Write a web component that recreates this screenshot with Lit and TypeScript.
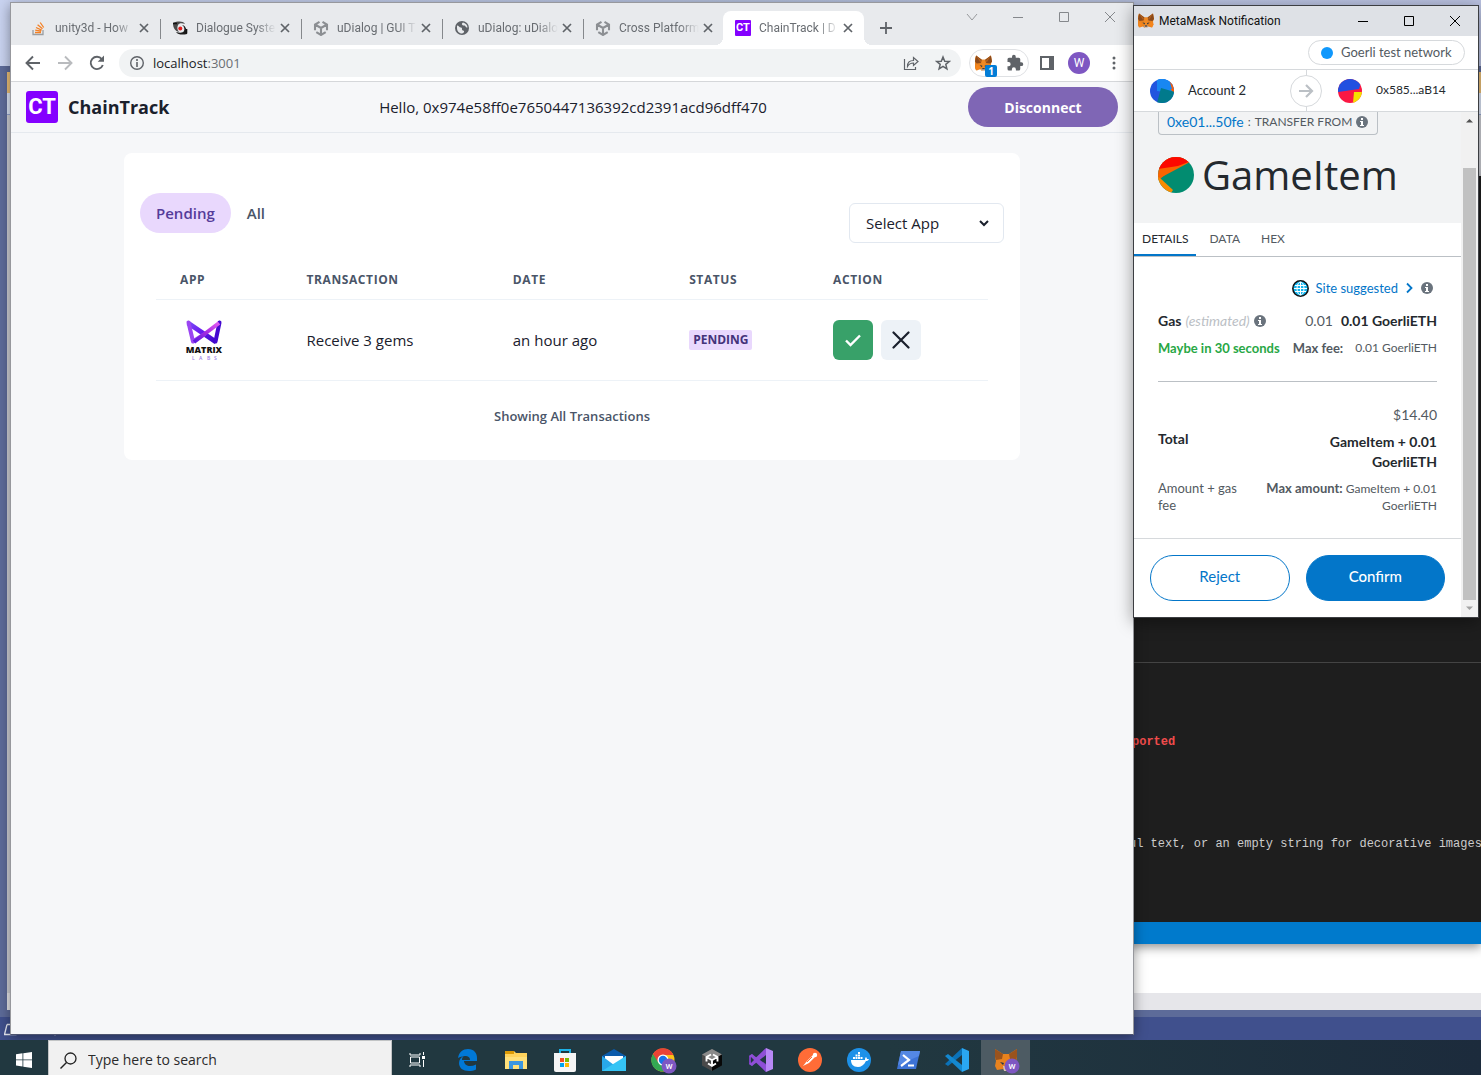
import { LitElement, html, css, svg } from "lit";
import { customElement, property, state } from "lit/decorators.js";
import { classMap } from "lit/directives/class-map.js";

/* ---------- shared icons ---------- */

const fox = (size: number) => html`<svg width=${size} height=${size} viewBox="0 0 32 32" aria-hidden="true">
  <path d="M2 1l11 8h6l11-8 2 11-2 5 1 6-3 6-8-2-3 3h-4l-3-3-8 2-3-6 1-6-2-5z" fill="#e8821e" />
  <path d="M2 1l11 8-2 6-8 1-3-4zM30 1L19 9l2 6 8 1 3-4z" fill="#8a4a1c" />
  <path d="M2 1l10 10-2 3zM30 1L20 11l2 3z" fill="#b5611d" />
  <path d="M4 17l6 6-6 6-3-6zM28 17l-6 6 6 6 3-6z" fill="#f6851b" />
  <path d="M13 9h6l1 14-4 3-4-3z" fill="#f08a24" />
  <path d="M9 19l5 1-1 3zM23 19l-5 1 1 3z" fill="#233447" />
  <path d="M13 25h6l1 3-2 2h-4l-2-2z" fill="#d7c1b3" />
  <path d="M14 25h4l1 2h-6z" fill="#161616" />
</svg>`;

const info = () => html`<svg width="12" height="12" viewBox="0 0 12 12" aria-hidden="true">
  <circle cx="6" cy="6" r="6" fill="#6a737d" />
  <path d="M5 2h2v2H5zM4 5h3v4h1v1H4V9h1V6H4z" fill="#fff" />
</svg>`;

const unity = html`<svg width="16" height="16" viewBox="0 0 16 16" aria-hidden="true">
  <path d="M6.500 1.800L2 4.500v5.700M9.500 1.800L14 4.500v5.700M3.300 12.200L8 15l4.700-2.800M2 4.500L8 8l6-3.500M8 8v7" fill="none" stroke="#8c8f93" stroke-width="2.100" />
</svg>`;

const closeGlyph = html`<svg width="10" height="10" viewBox="0 0 10 10" aria-hidden="true">
  <path d="M1 1l8 8M9 1L1 9" stroke="#5f6368" stroke-width="1.700" />
</svg>`;

const favicons: Record<string, unknown> = {
  stack: html`<svg width="16" height="16" viewBox="0 0 16 16" aria-hidden="true">
    <path d="M2 10v4.500h10V10" fill="none" stroke="#9a9ea2" stroke-width="1.300" />
    <path d="M4 12.500h6M4.200 10.200l6 1M5 7.500l5.700 2.600M6.600 4.800l4.900 4M9.200 2.500l3.500 5" stroke="#f48024" stroke-width="1.300" />
  </svg>`,
  eye: html`<svg width="16" height="16" viewBox="0 0 16 16" aria-hidden="true">
    <path d="M1 3c5-2 10-2 12 1-3-1-6-1-7 1s-1 5 1 7C3 11 1 8 1 3z" fill="#4a4a4a" />
    <path d="M15 14c-4 1-9 1-11-2 4 1 7 1 8-1s0-5-2-6c3 0 5 4 5 9z" fill="#1c1c1c" />
    <path d="M1 3.500h4M14.500 9v4.500" stroke="#111" stroke-width="1.600" />
    <circle cx="8.300" cy="8.500" r="2" fill="#e01f1f" />
  </svg>`,
  unity,
  globe: html`<svg width="16" height="16" viewBox="0 0 16 16" aria-hidden="true">
    <circle cx="8" cy="8" r="7" fill="#5f6368" />
    <path d="M3 5.500c2 0 2 2 4 2s0 3 2 3 1 3-1 3C5 13.500 3 11 3 8zM9 2.500c-2 1-1 3 1 3s1 2 3.500 2c0-2.500-2-4.500-4.500-5z" fill="#e8eaed" />
  </svg>`,
  ct: html`<span class="ct ct-small">CT</span>`,
};

/* ---------- browser window ---------- */

@customElement("browser-window")
class BrowserWindow extends LitElement {
  @state() private filter = "Pending";

  private tabs = [
    { icon: "stack", title: "unity3d - How" },
    { icon: "eye", title: "Dialogue Syste" },
    { icon: "unity", title: "uDialog | GUI T" },
    { icon: "globe", title: "uDialog: uDialo" },
    { icon: "unity", title: "Cross Platform" },
    { icon: "ct", title: "ChainTrack | D" },
  ];

  static styles = css`
    :host {
      display: flex;
      flex-direction: column;
      box-sizing: border-box;
      border: 1px solid #97989d;
      border-bottom-color: #4d5470;
      background: #f6f7f9;
      box-shadow: 0 3px 12px rgba(0, 0, 0, 0.4);
      font-family: "Open Sans", "Noto Sans", sans-serif;
      color: #1a202c;
    }
    * { box-sizing: border-box; }
    svg { display: block; flex: none; }
    button { font: inherit; color: inherit; border: 0; background: none; padding: 0; margin: 0; cursor: pointer; }
    .strip { display: flex; align-items: flex-end; height: 42px; padding-left: 8px; background: #e8eaed; }
    .tab {
      display: flex; align-items: center; width: 141px; height: 34px; padding: 0 11px 0 12px;
      position: relative; font-family: Roboto, "Open Sans", sans-serif; font-size: 12px; color: #696d72;
    }
    .tab .name {
      flex: 1; margin: 0 4px 0 8px; overflow: hidden; white-space: nowrap; line-height: 18px;
      mask-image: linear-gradient(to right, #000 75%, transparent);
    }
    .tab:not(.active):not(.last)::after { content: ""; position: absolute; right: -1px; top: 8px; height: 20px; width: 1px; background: #85888c; }
    .tab.active { margin-left: -1px; background: #fff; border-radius: 8px 8px 0 0; }
    .tab.active::before, .tab.active::after { content: ""; position: absolute; bottom: 0; width: 8px; height: 8px; }
    .tab.active::before { left: -8px; background: radial-gradient(circle at 0 0, transparent 8px, #fff 8px); }
    .tab.active::after { right: -8px; background: radial-gradient(circle at 100% 0, transparent 8px, #fff 8px); }
    .new { display: flex; align-items: center; height: 34px; margin-left: 15px; }
    .controls { display: flex; margin-left: auto; align-self: flex-start; }
    .controls button { display: grid; place-items: center; width: 46px; height: 28px; }
    .ct {
      display: grid; place-items: center; flex: none; background: #8400ff; color: #fff; white-space: nowrap;
      font-family: Roboto, "Open Sans", sans-serif; font-weight: 700;
    }
    .ct-small { width: 16px; height: 16px; font-size: 11px; line-height: 16px; border-radius: 1px; }
    .ct-big { width: 32px; height: 32px; font-size: 22px; line-height: 32px; border-radius: 3px; }

    .toolbar { display: flex; align-items: center; height: 37px; padding: 0 14px 0 12px; background: #fff; border-bottom: 1px solid #d5d7da; }
    .nav { display: flex; gap: 12px; margin-right: 12px; }
    .omnibox { display: flex; align-items: center; flex: 1; height: 28px; padding: 0 10px; border-radius: 14px; background: #f1f3f4; }
    .address { flex: 1; margin-left: 8px; font-size: 13px; line-height: 20px; }
    .address a { color: #202124; text-decoration: none; }
    .address .port { color: #6b6f73; }
    .omnibox .acts { display: flex; gap: 16px; }
    .ext { display: flex; align-items: center; gap: 14px; height: 28px; width: 60px; margin-left: 8px; padding: 0 5px; border: 1px solid #dfe1e4; border-radius: 14px; position: relative; }
    .count { position: absolute; left: 15px; top: 15px; width: 12px; height: 12px; border-radius: 2px; background: #037dd6; color: #fff; font-size: 10px; font-weight: 700; line-height: 12px; text-align: center; }
    .panel { margin-left: 10px; }
    .avatar { display: grid; place-items: center; width: 22px; height: 22px; margin: 0 13px; border-radius: 50%; background: #7e57c2; color: #fff; font-family: Roboto, sans-serif; font-size: 12px; }
    .menu { margin-right: 0; margin-left: 0; }

    .site-head { display: flex; align-items: center; justify-content: space-between; padding: 5px 15px; border-bottom: 1px solid #e5e9ee; }
    .brand { display: flex; align-items: center; gap: 10px; width: 152px; font-size: 18px; line-height: 28px; font-weight: 700; }
    .hello { font-size: 15px; line-height: 24px; margin: 0; }
    .disconnect { width: 150px; height: 40px; border-radius: 20px; background: #7f66b5; color: #fff; font-weight: 700; font-size: 14px; }

    .card { width: 80%; max-width: 896px; margin: 20px auto; padding: 40px 16px 33px; background: #fff; border-radius: 8px; }
    .filters { display: flex; align-items: flex-start; }
    .pill { height: 40px; padding: 0 16px; border-radius: 20px; font-size: 15px; font-weight: 600; color: #4a5568; }
    .pill.on { background: #e9d8fd; color: #553c9a; }
    .picker { position: relative; margin: 10px 0 0 auto; }
    .picker select { appearance: none; width: 155px; height: 40px; padding: 0 32px 0 16px; border: 1px solid #e2e8f0; border-radius: 6px; background: #fff; font: inherit; font-size: 15px; color: inherit; }
    .picker svg { position: absolute; right: 14px; top: 15px; pointer-events: none; }

    .table-box { padding: 16px 16px 0; }
    table { width: 100%; border-collapse: collapse; table-layout: fixed; }
    th, td { text-align: left; padding: 0 24px; border-bottom: 1px solid #edf2f7; white-space: nowrap; }
    th { height: 40px; padding-top: 2px; font-size: 12px; line-height: 16px; font-weight: 700; color: #4a5568; letter-spacing: 0.6px; }
    td { height: 81px; font-size: 15px; line-height: 24px; }
    .c1 { width: 15.200%; } .c2 { width: 24.800%; } .c3 { width: 21.200%; } .c4 { width: 17.300%; }
    .badge { display: block; width: fit-content; padding: 0 4px; border-radius: 2px; background: #e9d8fd; color: #44337a; font-size: 12px; line-height: 20px; font-weight: 700; }
    .pair { display: flex; gap: 8px; }
    .act { display: grid; place-items: center; width: 40px; height: 40px; border-radius: 6px; background: #edf2f7; }
    .act.ok { background: #38a169; }
    .foot { margin: 24px 0 0; text-align: center; font-size: 13px; line-height: 22px; font-weight: 600; color: #4a5568; }
    .app-logo { display: block; }
  `;

  render() {
    return html`
      <div class="strip">
        ${this.tabs.map((t, i) => html`
          <div class=${classMap({ tab: true, active: i === 5, last: i === 4 })}>
            ${favicons[t.icon]}
            <span class="name">${t.title}</span>
            <button aria-label="Close tab">${closeGlyph}</button>
          </div>`)}
        <button class="new" aria-label="New tab">
          <svg width="14" height="14" viewBox="0 0 14 14"><path d="M7 1v12M1 7h12" stroke="#5f6368" stroke-width="1.800" /></svg>
        </button>
        <div class="controls">
          <button aria-label="Search tabs"><svg width="12" height="12" viewBox="0 0 12 12"><path d="M1 3l5 6 5-6" fill="none" stroke="#97999c" /></svg></button>
          <button aria-label="Minimize"><svg width="12" height="12" viewBox="0 0 12 12"><path d="M1 6.500h10" stroke="#85888c" /></svg></button>
          <button aria-label="Maximize"><svg width="12" height="12" viewBox="0 0 12 12"><path d="M1.500 1.500h9v9h-9z" fill="none" stroke="#85888c" /></svg></button>
          <button aria-label="Close"><svg width="12" height="12" viewBox="0 0 12 12"><path d="M1 1l10 10M11 1L1 11" stroke="#85888c" /></svg></button>
        </div>
      </div>

      <div class="toolbar">
        <div class="nav">
          <button aria-label="Back"><svg width="20" height="20" viewBox="0 0 20 20"><path d="M17 10H4M10 3.500L3.500 10l6.500 6.500" fill="none" stroke="#5f6368" stroke-width="1.900" /></svg></button>
          <button aria-label="Forward"><svg width="20" height="20" viewBox="0 0 20 20"><path d="M3 10h13M10 3.500l6.500 6.500-6.500 6.500" fill="none" stroke="#b9bbbe" stroke-width="1.900" /></svg></button>
          <button aria-label="Reload"><svg width="20" height="20" viewBox="0 0 20 20"><path d="M15.800 12A6.200 6.200 0 1 1 14.800 6" fill="none" stroke="#5f6368" stroke-width="1.900" /><path d="M17 2.500v6.300h-6.300z" fill="#5f6368" /></svg></button>
        </div>
        <div class="omnibox">
          <svg width="16" height="16" viewBox="0 0 16 16"><circle cx="8" cy="8" r="6.300" fill="none" stroke="#5f6368" stroke-width="1.400" /><path d="M8 4v2M8 7v5" stroke="#5f6368" stroke-width="1.600" /></svg>
          <div class="address"><a href="#">localhost<span class="port">:3001</span></a></div>
          <div class="acts">
            <button aria-label="Share"><svg width="16" height="16" viewBox="0 0 16 16"><path d="M1.500 4v10.500h11V12M4.500 11.500c0-4 2-6 6-6V2.500l4.500 4-4.500 4V8c-3 0-4.500.8-6 3.500z" fill="none" stroke="#5f6368" stroke-width="1.200" /></svg></button>
            <button aria-label="Bookmark"><svg width="16" height="16" viewBox="0 0 16 16"><path d="M8 2l1.700 4.200 4.600.3-3.500 2.900 1.100 4.400L8 11.400l-3.900 2.400 1.100-4.400L1.700 6.500l4.600-.3z" fill="none" stroke="#5f6368" stroke-width="1.500" /></svg></button>
          </div>
        </div>
        <div class="ext">
          ${fox(17)}<span class="count">1</span>
          <svg width="18" height="18" viewBox="0 0 24 24"><path d="M20.500 11H19V7a2 2 0 0 0-2-2h-4V3.500a2.500 2.500 0 0 0-5 0V5H4a2 2 0 0 0-2 2v3.800h1.500a2.700 2.700 0 0 1 0 5.400H2V20a2 2 0 0 0 2 2h3.800v-1.500a2.700 2.700 0 0 1 5.400 0V22H17a2 2 0 0 0 2-2v-4h1.500a2.500 2.500 0 0 0 0-5z" fill="#5f6368" /></svg>
        </div>
        <svg class="panel" width="16" height="16" viewBox="0 0 16 16"><path d="M2 2h12v12H2z" fill="none" stroke="#5f6368" stroke-width="2" /><path d="M10 2h4v12h-4z" fill="#5f6368" /></svg>
        <span class="avatar">W</span>
        <button aria-label="Menu"><svg width="16" height="16" viewBox="0 0 16 16"><g transform="translate(3)" fill="#5f6368"><circle cx="8" cy="3" r="1.500" /><circle cx="8" cy="8" r="1.500" /><circle cx="8" cy="13" r="1.500" /></g></svg></button>
      </div>

      <header class="site-head">
        <div class="brand"><span class="ct ct-big">CT</span>ChainTrack</div>
        <p class="hello">Hello, 0x974e58ff0e7650447136392cd2391acd96dff470</p>
        <button class="disconnect">Disconnect</button>
      </header>

      <main class="card">
        <div class="filters">
          ${["Pending", "All"].map((f) => html`<button class=${classMap({ pill: true, on: this.filter === f })} @click=${() => (this.filter = f)}>${f}</button>`)}
          <div class="picker">
            <select aria-label="App"><option>Select App</option></select>
            <svg width="12" height="10" viewBox="0 0 12 10"><path d="M2 3l4 4 4-4" fill="none" stroke="#1a202c" stroke-width="2" /></svg>
          </div>
        </div>
        <div class="table-box">
          <table>
            <thead>
              <tr><th class="c1">APP</th><th class="c2">TRANSACTION</th><th class="c3">DATE</th><th class="c4">STATUS</th><th>ACTION</th></tr>
            </thead>
            <tbody>
              <tr>
                <td>
                  <svg class="app-logo" width="48" height="40" viewBox="0 0 48 40" role="img" aria-label="Matrix Labs">
                    <defs>
                      <linearGradient id="ml" x1="0" y1="0" x2="1" y2="1"><stop offset="0" stop-color="#7a4cf5" /><stop offset=".45" stop-color="#6a1cf0" /><stop offset="1" stop-color="#3a06c4" /></linearGradient>
                      <linearGradient id="mr" x1="1" y1="0" x2="0" y2="1"><stop offset="0" stop-color="#e35bf2" /><stop offset=".5" stop-color="#a52ae0" /><stop offset="1" stop-color="#5a1be0" /></linearGradient>
                    </defs>
                    <path d="M8 3l28 19" stroke="url(#ml)" stroke-width="5" />
                    <path d="M8.500 2.500L13 21.500l11-7" fill="none" stroke="#9b45f2" stroke-width="4" stroke-linejoin="round" stroke-linecap="round" />
                    <path d="M39.500 2.500L35.500 21.500" fill="none" stroke="#4408d0" stroke-width="4" stroke-linejoin="round" stroke-linecap="round" />
                    <path d="M39 3L14 22" stroke="url(#mr)" stroke-width="4" />
                    <text x="24" y="33" text-anchor="middle" font-family="Open Sans, sans-serif" font-weight="800" font-size="9" fill="#111">MATRIX</text>
                    <text x="12" y="40" font-family="Open Sans, sans-serif" font-weight="600" font-size="5" fill="#9b7fe8">L</text>
                    <text x="19" y="40" font-family="Open Sans, sans-serif" font-weight="600" font-size="5" fill="#9b7fe8">A</text>
                    <text x="27" y="40" font-family="Open Sans, sans-serif" font-weight="600" font-size="5" fill="#9b7fe8">B</text>
                    <text x="34" y="40" font-family="Open Sans, sans-serif" font-weight="600" font-size="5" fill="#9b7fe8">S</text>
                  </svg>
                </td>
                <td>Receive 3 gems</td>
                <td>an hour ago</td>
                <td><span class="badge">PENDING</span></td>
                <td>
                  <div class="pair">
                    <button class="act ok" aria-label="Approve"><svg width="18" height="18" viewBox="0 0 18 18"><path d="M2 9.500l4.500 4.500L16 4.500" fill="none" stroke="#fff" stroke-width="2.400" /></svg></button>
                    <button class="act" aria-label="Decline"><svg width="18" height="18" viewBox="0 0 18 18"><path d="M1.500 1.500l15 15M16.500 1.500l-15 15" stroke="#1a202c" stroke-width="2.200" stroke-linecap="round" /></svg></button>
                  </div>
                </td>
              </tr>
            </tbody>
          </table>
        </div>
        <p class="foot">Showing All Transactions</p>
      </main>
    `;
  }
}

/* ---------- wallet popup ---------- */

@customElement("wallet-window")
class WalletWindow extends LitElement {
  @state() private view = "DETAILS";

  static styles = css`
    :host {
      display: flex; flex-direction: column; box-sizing: border-box; border: 1px solid #3c3e42;
      background: #fff; box-shadow: 0 4px 16px rgba(0, 0, 0, 0.4);
      font-family: Lato, "Open Sans", sans-serif; color: #24292e; font-size: 13px; line-height: 20px;
    }
    * { box-sizing: border-box; }
    svg { display: block; flex: none; }
    button { font: inherit; color: inherit; border: 0; background: none; padding: 0; margin: 0; cursor: pointer; }
    a { color: #0376c9; text-decoration: none; }
    .title { display: flex; align-items: center; height: 30px; padding-left: 4px; background: #dee1e6; font-family: Roboto, "Open Sans", sans-serif; font-size: 12px; color: #111; }
    .title span { margin-left: 5px; flex: 1; white-space: nowrap; }
    .title button { display: grid; place-items: center; width: 46px; height: 30px; }
    .net { display: flex; justify-content: flex-end; padding: 4px 13px 4px 0; height: 34px; border-bottom: 1px solid #d6d9dc; }
    .net button { display: flex; align-items: center; gap: 8px; width: 157px; height: 25px; padding: 0 12px; border: 1px solid #d6d9dc; border-radius: 13px; color: #535a61; white-space: nowrap; }
    .net span + span { padding-bottom: 2px; }
    .dot { width: 12px; height: 12px; border-radius: 50%; background: #1098fc; }
    .accounts { display: grid; grid-template-columns: 1fr 32px 1fr; align-items: center; height: 42px; border-bottom: 1px solid #d6d9dc; }
    .who { display: flex; align-items: center; gap: 14px; padding-left: 16px; white-space: nowrap; }
    .who span { padding-bottom: 2px; }
    .who .addr { font-size: 12px; }
    .arrow { display: grid; place-items: center; height: 41px; background: linear-gradient(#d6d9dc, #d6d9dc) center / 1px 100% no-repeat; }
    .arrow span { display: grid; place-items: center; width: 32px; height: 32px; border: 1px solid #d6d9dc; border-radius: 50%; background: #fff; }

    .body { display: flex; flex: 1; }
    .scroll { flex: 1; min-width: 0; }
    .bar { display: flex; flex-direction: column; align-items: center; justify-content: space-between; width: 17px; background: #f1f1f1; padding: 6px 0; }
    .thumb { width: 13px; flex: 1; margin: 45px 0 6px; background: #c1c1c1; }
    .hero { height: 111px; padding: 0 24px; background: #f2f3f4; }
    .origin { display: flex; align-items: center; gap: 4px; width: 220px; height: 23px; padding: 0 8px 2px; border: 1px solid #bbc0c5; border-top: 0; border-radius: 0 0 4px 4px; color: #535a61; font-size: 12px; white-space: nowrap; }
    .origin a { font-size: 14px; }
    .asset { display: flex; align-items: center; gap: 8px; margin-top: 16px; font-family: "Open Sans", sans-serif; font-size: 40px; line-height: 48px; }
    .tabs { display: flex; gap: 5px; height: 34px; border-bottom: 1px solid #bbc0c5; }
    .tabs button { padding: 0 8px; height: 33px; color: #535a61; font-size: 12px; border-bottom: 2px solid transparent; }
    .tabs button.on { color: #24292e; border-color: #0376c9; }
    .details { padding: 21px 24px 24px; color: #535a61; }
    .row { display: flex; align-items: center; white-space: nowrap; }
    .site { justify-content: flex-end; gap: 7px; padding-right: 4px; margin-bottom: 13px; }
    .gas { gap: 4px; font-size: 14px; margin-bottom: 7px; }
    .gas em { color: #bbc0c5; }
    .gas .old { margin-left: auto; margin-right: 4px; }
    b { color: #24292e; }
    .wait { color: #28a745; font-weight: 700; flex: 1; }
    .fee b, .sub b { color: #535a61; font-size: 13px; }
    .fee span { margin-left: 12px; font-size: 12px; }
    .total { display: grid; grid-template-columns: 90px 1fr; align-items: center; margin-top: 23px; padding-top: 23px; border-top: 1px solid #bbc0c5; font-size: 14px; }
    .sum { display: grid; gap: 7px; text-align: right; }
    .sub { display: grid; grid-template-columns: 90px 1fr; margin-top: 8px; line-height: 17px; }
    .sub div + div { text-align: right; white-space: nowrap; font-size: 12px; }
    .actions { display: grid; grid-template-columns: 1fr 1fr; gap: 16px; padding: 16px; border-top: 1px solid #d6d9dc; }
    .actions button { height: 46px; padding-bottom: 4px; border: 1px solid #0376c9; border-radius: 23px; color: #0376c9; font-size: 15px; }
    .actions .go { background: #0376c9; color: #fff; font-weight: 500; }
  `;

  render() {
    return html`
      <div class="title">
        ${fox(16)}<span>MetaMask Notification</span>
        <button aria-label="Minimize"><svg width="12" height="12" viewBox="0 0 12 12"><path d="M1 6.500h10" stroke="#000" /></svg></button>
        <button aria-label="Maximize"><svg width="12" height="12" viewBox="0 0 12 12"><path d="M1.500 1.500h9v9h-9z" fill="none" stroke="#000" /></svg></button>
        <button aria-label="Close"><svg width="12" height="12" viewBox="0 0 12 12"><path d="M1 1l10 10M11 1L1 11" stroke="#000" /></svg></button>
      </div>
      <div class="net"><button><span class="dot"></span><span>Goerli test network</span></button></div>
      <div class="accounts">
        <div class="who">
          <svg width="24" height="24" viewBox="0 0 24 24"><clipPath id="a1"><circle cx="12" cy="12" r="12" /></clipPath><g clip-path="url(#a1)"><path d="M0 0h24v24H0z" fill="#2255df" /><path d="M7 0h17v14L7 12z" fill="#1887f2" /><path d="M19 0h5v14l-3-3z" fill="#fa5d08" /><path d="M7 0h12l3 10H7z" fill="#1887f2" /><path d="M11 9l14 4v11H7z" fill="#017a8c" /></g></svg>
          <span>Account 2</span>
        </div>
        <div class="arrow"><span><svg width="16" height="16" viewBox="0 0 16 16"><path d="M1 8h12M8 2l6 6-6 6" fill="none" stroke="#bbc0c5" stroke-width="2.200" /></svg></span></div>
        <div class="who">
          <svg width="24" height="24" viewBox="0 0 24 24"><clipPath id="a2"><circle cx="12" cy="12" r="12" /></clipPath><g clip-path="url(#a2)"><path d="M0 0h24v24H0z" fill="#fb1843" /><path d="M0 0h24l-3 10-21 3z" fill="#2250e0" /><path d="M16 13h8v11h-9z" fill="#f5e000" /></g></svg>
          <span class="addr">0x585...aB14</span>
        </div>
      </div>
      <div class="body">
        <div class="scroll">
          <div class="hero">
            <div class="origin"><a href="#">0xe01...50fe</a> : <span>TRANSFER FROM</span>${info()}</div>
            <div class="asset">
              <svg width="36" height="36" viewBox="0 0 36 36"><clipPath id="a3"><circle cx="18" cy="18" r="18" /></clipPath><g clip-path="url(#a3)"><path d="M0 0h36v36H0z" fill="#028c70" /><path d="M0 0h32v5L2 21z" fill="#f96400" /><path d="M0 0h33v4L20 9 0 12z" fill="#fc0800" /><path d="M0 12l9 4-7 6-2 2z" fill="#f96400" /><path d="M0 20l2 1 13 12-2 3H0z" fill="#f98b00" /></g></svg>
              <span>GameItem</span>
            </div>
          </div>
          <div class="tabs">
            ${["DETAILS", "DATA", "HEX"].map((t) => html`<button class=${classMap({ on: this.view === t })} @click=${() => (this.view = t)}>${t}</button>`)}
          </div>
          <div class="details">
            <div class="row site">
              <svg width="17" height="17" viewBox="0 0 17 17"><circle cx="8.500" cy="8.500" r="7.700" fill="#13b5ee" stroke="#111" stroke-width="1.500" /><g fill="none" stroke="#fff"><path d="M8.500 2v13M2 8.500h13M3 5.500h11M3 11.500h11" /><ellipse cx="8.500" cy="8.500" rx="3.500" ry="6.500" /></g></svg>
              <a href="#">Site suggested</a>
              <svg width="9" height="12" viewBox="0 0 9 12"><path d="M2 1.500L6.500 6 2 10.500" fill="none" stroke="#0376c9" stroke-width="1.800" /></svg>
              ${info()}
            </div>
            <div class="row gas"><b>Gas</b><em>(estimated)</em>${info()}<span class="old">0.01</span><b>0.01 GoerliETH</b></div>
            <div class="row fee"><div class="wait">Maybe in 30 seconds</div><b>Max fee:</b><span>0.01 GoerliETH</span></div>
            <div class="total">
              <b>Total</b>
              <div class="sum"><span>$14.40</span><b>GameItem + 0.01<br />GoerliETH</b></div>
            </div>
            <div class="sub">
              <div>Amount + gas<br />fee</div>
              <div><b>Max amount:</b> GameItem + 0.01<br />GoerliETH</div>
            </div>
          </div>
          <div class="actions"><button>Reject</button><button class="go">Confirm</button></div>
        </div>
        <div class="bar">
          <svg width="7" height="5" viewBox="0 0 7 5"><path d="M0 4.500h7L3.500 1z" fill="#505050" /></svg>
          <div class="thumb"></div>
          <svg width="7" height="5" viewBox="0 0 7 5"><path d="M0 .5h7L3.500 4z" fill="#a3a3a3" /></svg>
        </div>
      </div>
    `;
  }
}

/* ---------- taskbar ---------- */

const wBadge = svg`<circle cx="18" cy="18" r="7.500" fill="#7e57c2"/><text x="18" y="21" text-anchor="middle" font-family="Roboto, sans-serif" font-weight="500" font-size="8" fill="#fff">W</text>`;

const apps: { name: string; art: unknown; on?: boolean }[] = [
  { name: "Edge", art: svg`<path d="M3 11C4 5 8 2 13 2c6 0 9 4 9 9v3H9c0 3 3 5 6 5 2 0 4-.5 6-1.500v5c-2 1-5 1.500-7 1.500-6 0-10-3-10-8 0-3 2-6 5-7-1.500 1-2 2-2 4h8c0-3-2-4-5-4-3 0-5 1-7 2z" fill="#0078d7" transform="translate(0 -1)"/>` },
  { name: "Explorer", art: svg`<path d="M1 3h9l2 2h11v16H1z" fill="#ffd35c"/><path d="M1 3h9v3H1z" fill="#dc9a06"/><path d="M1 9h22v12H1z" fill="#ffe07a"/><path d="M5 21v-8h14v8h-4v-4H9v4z" fill="#3b96e0"/>` },
  { name: "Store", art: svg`<path d="M7 6V2h10v4" fill="none" stroke="#1db2e8" stroke-width="2"/><path d="M1 5h22v17a2 2 0 0 1-2 2H3a2 2 0 0 1-2-2z" fill="#f5f5f5"/><path d="M7 10h4v4H7z" fill="#f25022"/><path d="M12 10h4v4h-4z" fill="#7fba00"/><path d="M7 15h4v4H7z" fill="#00a4ef"/><path d="M12 15h4v4h-4z" fill="#ffb900"/>` },
  { name: "Mail", art: svg`<path d="M0 8l12-7 12 7v6H0z" fill="#0b5bab"/><path d="M3 8h18v10H3z" fill="#fff"/><path d="M0 8l12 9L24 8v15H0z" fill="#28a8ea"/><path d="M0 23l24-15v15z" fill="#35c4f5"/>` },
  { name: "Chrome", art: svg`<circle cx="12" cy="12" r="11.500" fill="#fbc116"/><path d="M12 12L7 22.500A11.500 11.500 0 0 0 12 23.500l3-6zM12 12L7 22.500A11.500 11.500 0 0 1 2 6z" fill="#34a853"/><path d="M2 6l5 8 5-7h10.400A11.500 11.500 0 0 0 2 6z" fill="#ea4335"/><circle cx="12" cy="12" r="5.500" fill="#fff"/><circle cx="12" cy="12" r="4.200" fill="#1a73e8"/>${wBadge}` },
  { name: "Unity", art: svg`<path d="M12 1l10 5.500v11L12 23 2 17.500v-11z" fill="#4a4a4a"/><path d="M12 1l10 5.500L12 12 2 6.500z" fill="#8a8a8a"/><path d="M12 12l10-5.500v11L12 23z" fill="#080808"/><path d="M11 6.500L6.500 9v4.500M13 6.500L17.500 9v4.500M8 15.500l4 2.300 4-2.300M6.500 9l5.500 3.200L17.500 9M12 12.200v5.600" fill="none" stroke="#fff" stroke-width="1.900"/>` },
  { name: "Visual Studio", art: svg`<path d="M17 0l7 3v18l-7 3z" fill="#b888f5"/><path d="M17 0L3 18l-3-2V8l3-2 14 18V16L8 10z" fill="#7a3fc0"/><path d="M17 0L0 16l3 2L17 7zM17 24v-7L3 6 0 8z" fill="#8f4fd6"/><path d="M2 9v6l3-3z" fill="#213840"/>` },
  { name: "Postman", art: svg`<circle cx="12" cy="12" r="12" fill="#ff6c37"/><path d="M5 18l4-5 6-6 2 2-6 6z" fill="#fff"/><circle cx="17" cy="7" r="2.200" fill="#fff"/><path d="M9 14l5-5" stroke="#ff6c37"/>` },
  { name: "Docker", art: svg`<circle cx="12" cy="12" r="12" fill="#1d91e8"/><path d="M4 12h14c0-1 0-2 1-3 1 1 1 2 1 2h2c-1 2-2 2-3 2-2 4-5 6-8 6-5 0-7-3-7-7z" fill="#fff"/><path d="M6 9h2v2H6zM8.500 9h2v2h-2zM11 9h2v2h-2zM13.500 9h2v2h-2zM8.500 6.500h2v2h-2zM11 6.500h2v2h-2zM11 4h2v2h-2z" fill="#fff"/>` },
  { name: "PowerShell", art: svg`<path d="M5 3h19l-4 18H1z" fill="#3d73d6"/><path d="M5 3h19l-1 5L2 17z" fill="#5488e4"/><path d="M7 7l6 5-8 6M12 17.500h6" fill="none" stroke="#fff" stroke-width="2.200"/>` },
  { name: "VS Code", art: svg`<path d="M17 0l7 3v18l-7 3z" fill="#2aa7f2"/><path d="M17 0v7L3 18l-3-2L17 0z" fill="#0b72b8"/><path d="M17 24v-7L3 6 0 8z" fill="#1488d0"/>` },
  { name: "MetaMask", on: true, art: svg`<path d="M1 1l8 5h6l8-5 0 8-1 4 1 5-2 4-6-1-2 2h-2l-2-2-6 1-2-4 1-5-1-4z" fill="#e8821e"/><path d="M1 1l8 5-1 5-6 1-1-3zM23 1l-8 5 1 5 6 1 1-3z" fill="#9a531d"/><path d="M6 14l4 1-1 2z" fill="#233447"/><path d="M9 18h4l1 3-2 2h-2z" fill="#d7c1b3"/>${wBadge}` },
];

@customElement("task-bar")
class TaskBar extends LitElement {
  @property() hint = "Type here to search";

  static styles = css`
    :host { display: flex; height: 35px; background: linear-gradient(to right, #213840 60%, #1c2b3c); font-family: "Open Sans", sans-serif; }
    * { box-sizing: border-box; }
    svg { display: block; flex: none; overflow: visible; }
    button { border: 0; background: none; padding: 5px 0 0; margin: 0; cursor: pointer; width: 49px; display: grid; place-items: center; }
    .start { width: 48px; }
    .search { display: flex; align-items: center; width: 344px; gap: 11px; padding: 4px 0 0 11px; border: 1px solid #c2c4c5; border-bottom: 0; background: #f1f1f1; }
    .search input { flex: 1; min-width: 0; border: 0; padding: 0; background: none; font: inherit; font-size: 14px; line-height: 24px; color: #2b2b2b; outline: 0; }
    .search input::placeholder { color: #2b2b2b; opacity: 1; }
    .view { margin-right: 1px; }
    .on { background: #4d5b63; }
  `;

  render() {
    return html`
      <button class="start" aria-label="Start"><svg width="16" height="16" viewBox="0 0 16 16"><path d="M0 2.200l6.500-.9v6.200H0zM7.300 1.200L16 0v7.500H7.300zM0 8.300h6.500v6.200L0 13.600zM7.300 8.300H16V16l-8.700-1.200z" fill="#fff" /></svg></button>
      <label class="search">
        <svg width="17" height="17" viewBox="0 0 17 17"><circle cx="10.500" cy="6.500" r="5.500" fill="none" stroke="#222" stroke-width="1.300" /><path d="M6.500 10.500L.5 16.500" stroke="#222" stroke-width="1.500" /></svg>
        <input aria-label=${this.hint} placeholder=${this.hint} />
      </label>
      <button class="view" aria-label="Task View"><svg width="16" height="16" viewBox="0 0 16 16"><path d="M1 1v2h10V1M1 15v-2h10v2M1.500 5h9v6h-9z" fill="none" stroke="#fff" /><path d="M14.500 0v3M14.500 8v7" stroke="#fff" /><path d="M13 4h3v3h-3z" fill="#fff" /></svg></button>
      ${apps.map((a) => html`<button class=${classMap({ on: !!a.on })} aria-label=${a.name}><svg width="24" height="24" viewBox="0 0 24 24">${a.art}</svg></button>`)}
    `;
  }
}

/* ---------- desktop ---------- */

@customElement("app-root")
class AppRoot extends LitElement {
  static styles = css`
    :host { display: flex; flex-direction: column; height: 100vh; overflow: hidden; }
    * { box-sizing: border-box; }
    .desktop { position: relative; flex: 1; overflow: hidden; background: linear-gradient(to right, #c9d3f0, #b3bfdc 50%, #b9c1e0); }
    .ide { position: absolute; inset: 66px 0 0 0; display: flex; flex-direction: column; background: #5d6b99; }
    .ide-main { flex: 1; display: flex; flex-direction: column; margin: 6px 0 0 7px; background: #cfd0d6; }
    .ide-tab { height: 21px; background: #ecc078; }
    .ide-bar { height: 22px; background: #dde6f7; border-bottom: 1px solid #94a6d0; }
    .ide-page { flex: 1; }
    .ide-white { height: 60px; border-left: 6px solid #cfd0d6; background: #fff; }
    .ide-grey { height: 17px; background: #e6e6ea; }
    .ide-status { height: 23px; margin-top: 7px; padding: 6px 4px; background: #40508d; }
    .ide-status svg { display: block; }
    .editor { position: absolute; top: 176px; bottom: 96px; left: calc(100% - 352px); right: 0; display: flex; flex-direction: column; background: #1e1e1e; box-shadow: 0 3px 10px rgba(0, 0, 0, 0.45); }
    .source { flex: 1; border-bottom: 1px solid #444; }
    .terminal { height: 259px; padding-top: 69px; font-family: "Liberation Mono", monospace; font-size: 12px; line-height: 20px; color: #ccc; white-space: nowrap; }
    .terminal p { margin: 0 0 82px; }
    .error { padding-left: 3px; color: #f14c4c; font-weight: 700; }
    .editor-status { height: 22px; background: #007acc; }
    browser-window { position: absolute; inset: 2px 347px 5px 10px; }
    wallet-window { position: absolute; top: 5px; right: 2px; width: 346px; }
  `;

  render() {
    return html`
      <div class="desktop">
        <div class="ide">
          <div class="ide-main">
            <div class="ide-tab"></div><div class="ide-bar"></div><div class="ide-page"></div>
            <div class="ide-white"></div><div class="ide-grey"></div>
          </div>
          <div class="ide-status"><svg width="60" height="14" viewBox="0 0 60 14"><path d="M3 1.500h8M3 1.500L.5 11.500h12M50 11.500h2" fill="none" stroke="#e8eaf4" stroke-width="1.300" /></svg></div>
        </div>
        <div class="editor">
          <div class="source"></div>
          <div class="terminal"><p class="error">ported</p><p>ul text, or an empty string for decorative images</p></div>
          <div class="editor-status"></div>
        </div>
        <browser-window></browser-window>
        <wallet-window></wallet-window>
      </div>
      <task-bar></task-bar>
    `;
  }
}
